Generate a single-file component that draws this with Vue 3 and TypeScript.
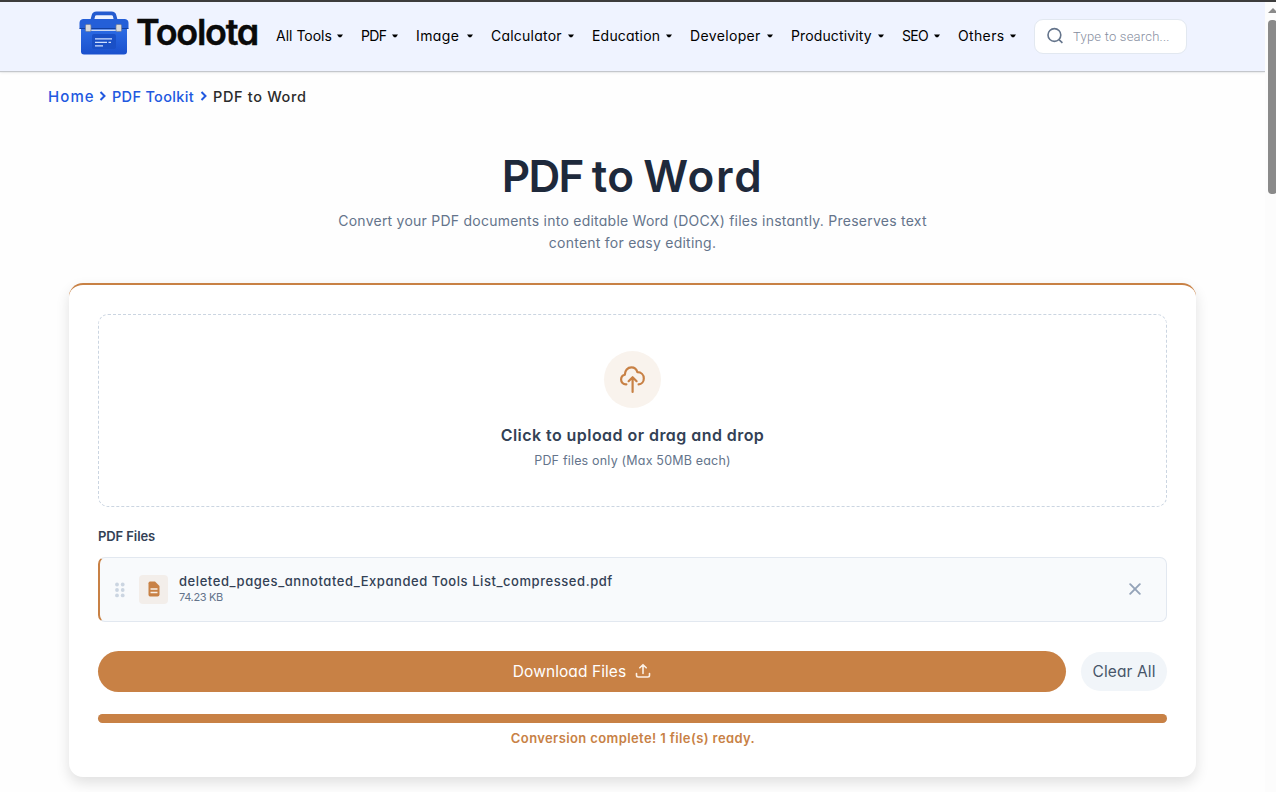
<script setup lang="ts">
interface NavItem {
  label: string
  width: number
  tracking: number
}

const nav: NavItem[] = [
  { label: 'All Tools', width: 67, tracking: 0 },
  { label: 'PDF', width: 37, tracking: -0.6 },
  { label: 'Image', width: 57, tracking: 0.4 },
  { label: 'Calculator', width: 83, tracking: 0.22 },
  { label: 'Education', width: 80, tracking: 0.2 },
  { label: 'Developer', width: 83, tracking: 0.35 },
  { label: 'Productivity', width: 93, tracking: 0.12 },
  { label: 'SEO', width: 38, tracking: -0.7 },
  { label: 'Others', width: 58, tracking: 0.35 },
]

const progress = 100
</script>

<template>
  <div class="window">
    <div class="page">
      <header class="header">
        <a class="brand">
          <svg class="brand-icon" width="50" height="45" viewBox="0 0 50 45">
            <defs>
              <linearGradient id="box" x1="0" y1="0" x2="0" y2="1">
                <stop offset="0" stop-color="#2c6be4" />
                <stop offset="1" stop-color="#1a50cd" />
              </linearGradient>
            </defs>
            <path d="M13.2 9.5 L14.4 4.6 Q15 2.4 17.5 2.4 H32.5 Q35 2.4 35.6 4.6 L36.8 9.5" fill="none" stroke="#245bd0" stroke-width="3.6" />
            <path d="M2 18 H48 V40.5 Q48 43.5 45 43.5 H5 Q2 43.5 2 40.5 Z" fill="url(#box)" />
            <path d="M4 8 H46 Q49.5 8.5 49.5 12 V17.5 H.5 V12 Q.5 8.5 4 8 Z" fill="#245fd8" />
            <path d="M.5 17.5 H49.5" stroke="#123f9f" stroke-width="1" />
            <path d="M12 19.3 H37" stroke="#d6e0f3" stroke-width="1.3" />
            <rect x="6.5" y="13.5" width="5.5" height="7" rx="1.2" fill="#d9d9d9" stroke="#6f7b93" stroke-width=".7" />
            <rect x="37" y="13.5" width="5.5" height="7" rx="1.2" fill="#d9d9d9" stroke="#6f7b93" stroke-width=".7" />
            <rect x="13" y="23" width="24" height="15" rx="2" fill="#1a50c6" />
            <path d="M16 27.8 H33 M16 31.4 H28 M29.5 31.4 H32 M16 34.8 H24" stroke="#cfe0ff" stroke-width="1.3" />
          </svg>
          <span class="brand-name">Toolota</span>
        </a>
        <nav class="nav">
          <a v-for="item in nav" :key="item.label" class="nav-item" :style="{ width: item.width + 'px', letterSpacing: item.tracking + 'px' }">
            <span>{{ item.label }}</span>
            <svg class="caret" width="6" height="4" viewBox="0 0 6 4"><path d="M0 .5 H6 L4 3.2 H2 Z" fill="#000" /></svg>
          </a>
        </nav>
        <div class="search">
          <svg width="18" height="18" viewBox="0 0 18 18" fill="none" stroke="#64748b" stroke-width="1.6">
            <circle cx="7.4" cy="8" r="6.4" />
            <path d="M12 12.6 L15.4 15.8" />
          </svg>
          <span>Type to search...</span>
        </div>
      </header>

      <div class="crumbs">
        <a class="c-home">Home</a>
        <svg width="8" height="10" viewBox="0 0 8 10"><path d="M1.5 1 L5.5 5 L1.5 9" fill="none" stroke="#2158e0" stroke-width="2" /></svg>
        <a class="c-kit">PDF Toolkit</a>
        <svg width="8" height="10" viewBox="0 0 8 10"><path d="M1.5 1 L5.5 5 L1.5 9" fill="none" stroke="#2158e0" stroke-width="2" /></svg>
        <span class="c-now">PDF to Word</span>
      </div>

      <h1><span class="h1-pdf">PDF</span> to <span class="h1-word">Word</span></h1>
      <p class="intro">
        <span>Convert your PDF documents into editable Word (DOCX) files instantly. Preserves text</span>
        <span>content for easy editing.</span>
      </p>

      <main class="card">
        <section class="drop">
          <div class="drop-icon">
            <svg width="26" height="28" viewBox="0 0 26 28" fill="none" stroke="#c88145" stroke-width="2.2" stroke-linecap="round" stroke-linejoin="round">
              <path d="M6.4 18.4 C3 18.6 1.1 16.3 1.1 13.6 C1.1 11 2.6 9.4 4.8 8.8 C4.8 4.6 7.6 1.4 11.4 1.4 C14.4 1.4 16.6 3.2 17.4 6.2 C21.2 6.2 23.8 8.8 23.8 12.4 C23.8 15.7 21.6 18.2 18.6 18.4" />
              <path d="M12.6 26 V11.6 M8.6 15.2 L12.6 11.2 L16.6 15.2" />
            </svg>
          </div>
          <div class="drop-title">Click to upload or drag and drop</div>
          <div class="drop-hint">PDF files only (Max 50MB each)</div>
        </section>

        <h2>PDF Files</h2>
        <div class="file">
          <svg class="grip" width="10" height="16" viewBox="0 0 10 16" fill="#cbd5e1">
            <circle cx="2" cy="2.5" r="1.9" /><circle cx="7.7" cy="2.5" r="1.9" />
            <circle cx="2" cy="8" r="1.9" /><circle cx="7.7" cy="8" r="1.9" />
            <circle cx="2" cy="13.4" r="1.9" /><circle cx="7.7" cy="13.4" r="1.9" />
          </svg>
          <div class="file-icon">
            <svg width="12" height="16" viewBox="0 0 12 16">
              <path d="M2 .5 H7 L11.5 5 V13.5 Q11.5 15.5 9.5 15.5 H2 Q.5 15.5 .5 13.5 V2.3 Q.5 .5 2 .5 Z" fill="#c88145" />
              <path d="M2.5 8 H9.5 M2.5 11.5 H9.5" stroke="#f8efe6" stroke-width="1.3" />
            </svg>
          </div>
          <div class="file-text">
            <div class="file-name">deleted_pages_annotated_Expanded Tools List_compressed.pdf</div>
            <div class="file-size">74.23 KB</div>
          </div>
          <svg class="remove" width="12" height="12" viewBox="0 0 12 12"><path d="M1.2 1.2 L10.8 10.8 M10.8 1.2 L1.2 10.8" stroke="#94a3b8" stroke-width="1.9" stroke-linecap="round" /></svg>
        </div>

        <div class="actions">
          <button class="download">
            <span>Download Files</span>
            <svg width="16" height="16" viewBox="0 0 16 16" fill="none" stroke="#fbf0e6" stroke-width="1.6" stroke-linecap="round" stroke-linejoin="round">
              <path d="M8 10.5 V2 M4.8 4.8 L8 1.7 L11.2 4.8 M1.5 10.5 V12.3 Q1.5 14 3.2 14 H12.8 Q14.5 14 14.5 12.3 V10.5" />
            </svg>
          </button>
          <button class="clear"><span>Clear All</span></button>
        </div>

        <div class="track"><div class="bar" :style="{ width: progress + '%' }"></div></div>
        <div class="status"><span>Conversion complete! 1 file(s) ready.</span></div>
      </main>
    </div>
    <div class="scrollbar">
      <div class="arrow"></div>
      <div class="thumb"></div>
    </div>
  </div>
</template>

<style>
body {
  overflow: hidden;
}
</style>

<style scoped>
* {
  box-sizing: border-box;
}
.window {
  display: flex;
  width: 1276px;
  height: 792px;
  border-top: 2px solid #3c3c3c;
  overflow: hidden;
  background: #fefefe;
  font-family: Inter, 'Liberation Sans', sans-serif;
  font-feature-settings: 'cv11';
  white-space: nowrap;
}
.page {
  width: 1265px;
  height: 790px;
  flex: none;
  overflow: hidden;
}
.header {
  display: flex;
  height: 69px;
  padding-left: 79px;
  background: #eff3ff;
  box-shadow: 0 1px 1px #c4c7cc, 0 2px 3px rgba(0, 0, 0, 0.06);
}
.brand {
  display: flex;
  width: 197px;
  flex: none;
}
.brand-icon {
  margin-top: 9px;
  margin-right: 7px;
}
.brand-name {
  font-size: 36px;
  font-weight: 600;
  line-height: 60px;
  letter-spacing: -1.3px;
  color: #0a0a0a;
  -webkit-text-stroke: 0.4px #0a0a0a;
}
.nav {
  display: flex;
  gap: 18px;
  height: 67px;
  align-items: center;
  font-size: 14px;
  color: #000;
}
.nav-item {
  display: flex;
  justify-content: space-between;
  align-items: center;
}
.caret {
  flex: none;
}
.search {
  display: flex;
  align-items: center;
  gap: 8px;
  width: 153px;
  height: 35px;
  margin: 17px 0 0 18px;
  padding: 0 0 1px 12px;
  border: 1px solid #e2e8f0;
  border-radius: 9px;
  background: #fff;
  color: #858d9e;
  font-family: Roboto, sans-serif;
  font-size: 13px;
  font-weight: 300;
  letter-spacing: 0.22px;
}
.crumbs {
  display: flex;
  align-items: center;
  height: 20px;
  margin: 15px 0 0 48px;
  font-size: 14.5px;
  font-weight: 500;
  color: #2158e0;
}
.c-home {
  width: 51px;
  font-size: 15px;
  letter-spacing: 1.1px;
}
.c-kit {
  width: 88px;
  margin-left: 5px;
  letter-spacing: 0.32px;
}
.c-now {
  margin-left: 5px;
  letter-spacing: 0.65px;
  color: #2b2b2b;
}
h1 {
  margin: 42px 0 0;
  height: 56px;
  line-height: 56px;
  text-align: center;
  font-size: 44px;
  font-weight: 600;
  letter-spacing: 0.3px;
  word-spacing: -2.5px;
  color: #1e293b;
}
.h1-pdf {
  letter-spacing: -1.6px;
}
.h1-word {
  letter-spacing: 1.7px;
}
.intro {
  display: flex;
  flex-direction: column;
  align-items: center;
  margin: 6px 0 0;
  font-size: 14px;
  line-height: 22px;
  letter-spacing: 0.24px;
  color: #64748b;
}
.card {
  width: 1127px;
  height: 494px;
  margin: 29px 0 0 69px;
  padding: 29px;
  border-top: 2px solid #c88145;
  border-radius: 14px;
  background: #fff;
  box-shadow: 0 6px 14px rgba(0, 0, 0, 0.12);
}
.drop {
  display: flex;
  flex-direction: column;
  align-items: center;
  height: 193px;
  padding-top: 36px;
  border: 1px dashed #cbd5e1;
  border-radius: 10px;
}
.drop-icon {
  display: flex;
  align-items: center;
  justify-content: center;
  width: 57px;
  height: 57px;
  border-radius: 50%;
  background: #f9f3ed;
}
.drop-title {
  margin-top: 15px;
  font-size: 16px;
  line-height: 24px;
  font-weight: 600;
  letter-spacing: 0.45px;
  color: #334155;
}
.drop-hint {
  margin-top: 4px;
  font-size: 12.5px;
  line-height: 20px;
  letter-spacing: 0.19px;
  color: #64748b;
}
h2 {
  margin: 19px 0 0;
  font-size: 13px;
  line-height: 20px;
  font-weight: 600;
  letter-spacing: -0.1px;
  color: #334155;
}
.file {
  display: flex;
  align-items: center;
  height: 65px;
  margin-top: 11px;
  padding: 0 25px 0 15px;
  border: 1px solid #e2e8f0;
  border-left: 2px solid #c88145;
  border-radius: 7px;
  background: #f8fafc;
}
.grip {
  margin-top: 1px;
}
.file-icon {
  display: flex;
  align-items: center;
  justify-content: center;
  width: 29px;
  height: 29px;
  margin-left: 14px;
  border-radius: 4px;
  background: #f3eeea;
}
.file-icon svg {
  margin-bottom: 1px;
}
.file-text {
  margin: 0 0 1px 11px;
  flex: 1;
}
.file-name {
  font-size: 13px;
  line-height: 16px;
  font-weight: 500;
  letter-spacing: 0.56px;
  color: #334155;
}
.file-size {
  font-size: 11px;
  line-height: 16px;
  letter-spacing: -0.35px;
  color: #64748b;
}
.remove {
  margin-bottom: 2px;
}
.actions {
  display: flex;
  align-items: center;
  justify-content: space-between;
  height: 41px;
  margin-top: 29px;
}
button {
  display: flex;
  align-items: center;
  justify-content: center;
  border: 0;
  padding: 0;
  font: inherit;
  font-feature-settings: inherit;
}
.download {
  gap: 9px;
  width: 968px;
  height: 41px;
  border-radius: 21px;
  background: #c88145;
  color: #fff;
  font-size: 15.5px;
  letter-spacing: 0.08px;
}
.download svg {
  margin-bottom: 1px;
}
.clear {
  width: 86px;
  height: 39px;
  border-radius: 20px;
  background: #f1f5f9;
  color: #475569;
  font-size: 15.5px;
  letter-spacing: 0.12px;
}
.track {
  height: 9px;
  margin-top: 22px;
  border-radius: 5px;
  background: #e2e8f0;
}
.bar {
  height: 9px;
  border-radius: 5px;
  background: #c88145;
}
.status {
  margin-top: 5px;
  padding-left: 1px;
  text-align: center;
  font-size: 13px;
  line-height: 20px;
  font-weight: 600;
  letter-spacing: 0.39px;
  color: #c88145;
}
.scrollbar {
  width: 11px;
  height: 790px;
  flex: none;
  overflow: hidden;
  background: #fcfcfc;
}
.arrow {
  width: 0;
  margin: 6px 0 0 3px;
  border: 5px solid transparent;
  border-top: 0;
  border-bottom-color: #8a8a8a;
}
.thumb {
  width: 9px;
  height: 174px;
  margin: 7px 0 0 3px;
  border-radius: 4px;
  background: #8a8a8a;
}
</style>
